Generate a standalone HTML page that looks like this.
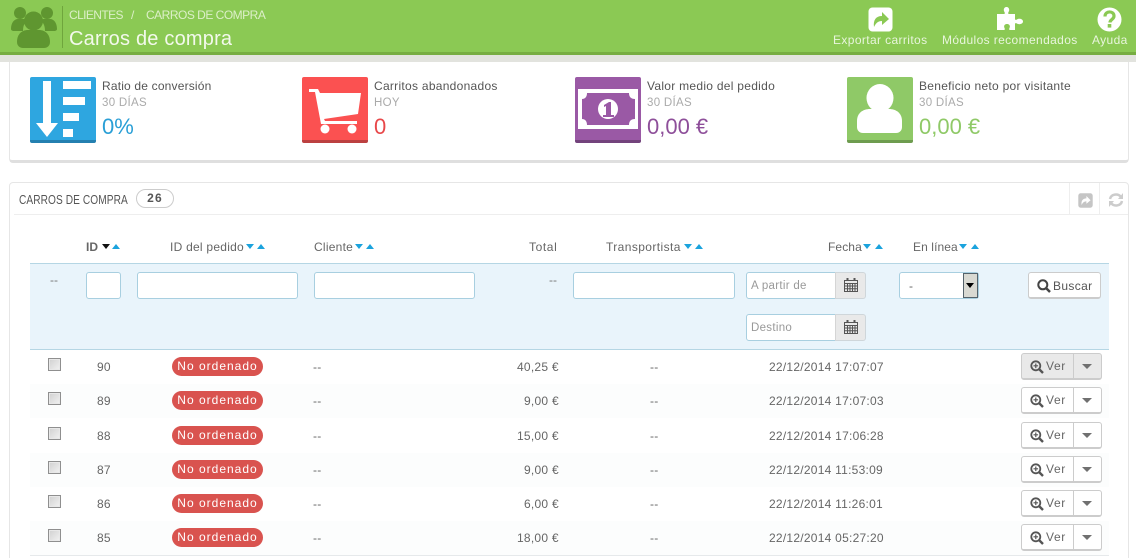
<!DOCTYPE html>
<html><head><meta charset="utf-8"><style>
html,body{margin:0;padding:0;overflow:hidden;width:1136px;height:558px;background:#fff}
#w{width:1136px;height:558px;overflow:hidden;background:#fff;position:relative;font-family:"Liberation Sans",sans-serif;color:#666;font-size:12px}
.a{position:absolute;white-space:nowrap}
.hd{color:#dcefc8;font-size:12px;letter-spacing:.35px}
.tool{color:#e8f5dc;font-size:12px;letter-spacing:.38px;top:33px}
.k{top:79px;color:#555;font-size:12px;letter-spacing:.28px}
.s{top:97px;color:#aaa;font-size:11.5px;letter-spacing:.3px}
.v{top:114px;font-size:22px;line-height:26px}
.ic{top:77px;width:66px;height:63px;border-radius:2px;overflow:hidden}
.th{top:240px;color:#666;font-size:12px;letter-spacing:.25px}
.dn,.up{position:absolute;width:0;height:0;border-left:4.5px solid transparent;border-right:4.5px solid transparent;top:244px}
.dn{border-top:5px solid #1ba3dd}
.up{border-bottom:5px solid #1ba3dd}
.in{position:absolute;box-sizing:border-box;background:#fff;border:1px solid #a8cfe0;border-radius:3px;height:27px;top:272px}
.cal{position:absolute;left:835px;width:31px;height:27px;box-sizing:border-box;background:#e9e9e9;border:1px solid #cfd6da;border-left:1px solid #d5d5d5;border-radius:0 3px 3px 0}
.ph{color:#999;font-size:11.5px;line-height:27px;letter-spacing:.3px;left:746px;width:90px;border-radius:3px 0 0 3px}
.r{position:absolute;left:30px;width:1079px;height:34px;border-bottom:1px solid #e6e9eb;background:#fff}
.r.o{background:#fcfdfd}
.c{position:absolute;color:#666;font-size:12px;letter-spacing:.25px}
.cb{position:absolute;left:48px;width:13px;height:13px;box-sizing:border-box;border:1px solid #8f8f8f;background:linear-gradient(135deg,#d0d0d0,#f2f2f2);box-shadow:inset 0 0 0 1px #e8e8e8}
.b{position:absolute;left:172px;width:91px;height:19px;border-radius:10px;background:#d9534f;color:#fff;font-size:12px;line-height:19px;text-align:center;letter-spacing:1px}
.ver{position:absolute;left:1021px;width:81px;height:27px;box-sizing:border-box;border:1px solid #ccc;border-bottom:2px solid #ccc;border-radius:3px;background:#fff}
.ver i{position:absolute;left:51px;top:0;height:100%;border-left:1px solid #ccc}
.ver b{position:absolute;left:60px;top:10px;width:0;height:0;border-left:5px solid transparent;border-right:5px solid transparent;border-top:5px solid #707070}
.ver span{position:absolute;left:24px;top:5px;font-size:12px;letter-spacing:.6px;color:#666}
.ver svg{position:absolute;left:8px;top:6px}
</style></head><body><div id="w">

<!-- KPI panel -->
<div class="a" style="left:9px;top:56px;width:1120px;height:107px;box-sizing:border-box;border:1px solid #e6e6e6;border-bottom:3px solid #dfdfdf;border-radius:4px;background:#fff"></div>

<div class="a" style="left:0;top:0;width:1136px;height:52px;background:#8bc954"></div>
<div class="a" style="left:0;top:52px;width:1136px;height:3px;background:#77ad42"></div>
<div class="a" style="left:0;top:55px;width:1136px;height:7px;background:#e2e3de"></div>

<svg class="a" style="left:10px;top:5px" width="48" height="44" viewBox="0 0 48 44" fill="#5f9630">
<circle cx="10" cy="8" r="6"/><circle cx="37" cy="8" r="6"/>
<path d="M1 24c0-6 3-10 7-10h6c2 0 3 1 3 2-3 2-4 6-4 10H4c-2 0-3-1-3-2zM47 24c0-6-3-10-7-10h-6c-2 0-3 1-3 2 3 2 4 6 4 10h9c2 0 3-1 3-2z"/>
<circle cx="23.500" cy="16" r="9.500"/>
<path d="M7 37c0-8 5-12 11-12h11c6 0 11 4 11 12 0 4-3 6-6 6H13c-3 0-6-2-6-6z"/>
</svg>
<div class="a" style="left:62px;top:6px;width:1px;height:42px;background:#6fa53d"></div>
<div class="a hd" style="left:69px;top:8px;letter-spacing:-.6px">CLIENTES</div>
<div class="a hd" style="left:131px;top:8px">/</div>
<div class="a hd" style="left:146px;top:8px;letter-spacing:-.5px">CARROS DE COMPRA</div>
<div class="a" style="left:69px;top:28px;color:#f3f9ec;font-size:20px;letter-spacing:.2px">Carros de compra</div>

<svg class="a" style="left:868px;top:7px" width="25" height="25" viewBox="0 0 25 25">
<rect width="24" height="24" x=".5" y=".5" rx="4" fill="#fff"/>
<path d="M6 20c-1-7 2-11 8-11V5l7 7-7 6v-4c-4 0-6 2-8 6z" fill="#8bc954"/></svg>
<div class="a tool" style="left:833px">Exportar carritos</div>
<svg class="a" style="left:996px;top:5px" width="28" height="27" viewBox="0 0 28 27" fill="#fff">
<path d="M1 9h7c1 0 1-1 .5-2C7 5 8 2 10.500 2s3.500 3 2 5c-.5 1-.5 2 .5 2h6v5c0 1 1 1 2 .5 2-1.500 6-.5 6 2s-4 3.500-6 2c-1-.5-2-.5-2 .5v6h-5c-1 0-1-1-.5-2 1-2 0-4-2.500-4s-3.500 2-2.500 4c.5 1 .5 2-.5 2H1z"/></svg>
<div class="a tool" style="left:942px">Módulos recomendados</div>
<svg class="a" style="left:1097px;top:7px" width="25" height="25" viewBox="0 0 25 25">
<circle cx="12.500" cy="12.500" r="12" fill="#fff"/>
<path d="M8 9.500c0-6 9-6 9-.5 0 3.500-4 3.500-4 6.500" fill="none" stroke="#8bc954" stroke-width="3.200"/>
<rect x="10.700" y="17" width="3.600" height="3.600" fill="#8bc954"/></svg>
<div class="a tool" style="left:1092px">Ayuda</div>

<div class="a ic" style="left:30px;background:#2ea6e0;border-bottom:3px solid #2480b0">
<svg width="66" height="63" viewBox="0 0 66 63" fill="#fff">
<rect x="13" y="4" width="8" height="45"/><path d="M6 46h22L17 60z"/>
<rect x="33" y="4" width="28" height="8"/><rect x="33" y="20" width="22" height="8"/><rect x="33" y="36" width="16" height="8"/><rect x="33" y="52" width="10" height="8"/>
</svg></div>
<div class="a k" style="left:102px;letter-spacing:.18px">Ratio de conversión</div>
<div class="a s" style="left:102px">30 DÍAS</div>
<div class="a v" style="left:102px;color:#2a9fd6">0%</div>

<div class="a ic" style="left:302px;background:#fb5151;border-bottom:3px solid #bc4040">
<svg width="66" height="63" viewBox="0 0 66 63" fill="#fff">
<path d="M7 12h9l2 4h41l-3 21-34 5 1 2h32v3H19L13 15H7z"/><circle cx="23" cy="52" r="4.500"/><circle cx="50" cy="52" r="4.500"/>
</svg></div>
<div class="a k" style="left:374px">Carritos abandonados</div>
<div class="a s" style="left:374px">HOY</div>
<div class="a v" style="left:374px;color:#e8484a">0</div>

<div class="a ic" style="left:575px;background:#9a59a5;border-bottom:3px solid #73437c">
<svg width="66" height="63" viewBox="0 0 66 63">
<rect x="3" y="12" width="60" height="40" fill="#fff"/>
<path d="M12 16h42c0 4 2 6 6 6v20c-4 0-6 2-6 6H12c0-4-2-6-5-6V22c3 0 5-2 5-6z" fill="#9a59a5"/>
<circle cx="33" cy="32" r="10" fill="#fff"/>
<path d="M29 28l5-3h2v13h3v2H28v-2h3V29l-2 1z" fill="#9a59a5"/>
</svg></div>
<div class="a k" style="left:647px">Valor medio del pedido</div>
<div class="a s" style="left:647px">30 DÍAS</div>
<div class="a v" style="left:647px;color:#8e4f9a">0,00 €</div>

<div class="a ic" style="left:847px;background:#8fc967;border-bottom:3px solid #6e9c4f">
<svg width="66" height="63" viewBox="0 0 66 63" fill="#fff">
<ellipse cx="33" cy="21" rx="13.500" ry="14"/>
<path d="M10 50V44c0-8 6-12 13-12h19c7 0 13 4 13 12v6c0 3-2 6-6 6H16c-4 0-6-3-6-6z"/>
</svg></div>
<div class="a k" style="left:919px">Beneficio neto por visitante</div>
<div class="a s" style="left:919px">30 DÍAS</div>
<div class="a v" style="left:919px;color:#8fc967">0,00 €</div>

<!-- Table panel -->
<div class="a" style="left:9px;top:182px;width:1120px;height:400px;box-sizing:border-box;border:1px solid #e6e6e6;border-radius:4px;background:#fff"></div>
<div class="a" style="left:14px;top:214px;width:1114px;height:1px;background:#eee"></div>
<div class="a" style="left:19px;top:192px;color:#555;font-size:13px;letter-spacing:.1px;transform:scaleX(.78);transform-origin:0 0">CARROS DE COMPRA</div>
<div class="a" style="left:136px;top:189px;width:38px;height:19px;box-sizing:border-box;border:1px solid #ccc;border-radius:10px;background:#fff;text-align:center;font-weight:bold;font-size:12px;line-height:17px;letter-spacing:1.2px;color:#555">26</div>
<div class="a" style="left:1069px;top:183px;width:1px;height:31px;background:#eee"></div>
<div class="a" style="left:1099px;top:183px;width:1px;height:31px;background:#eee"></div>
<svg class="a" style="left:1078px;top:193px" width="15" height="15" viewBox="0 0 25 25">
<rect x=".5" y=".5" width="24" height="24" rx="4" fill="#c5c5c5"/><path d="M6 20c-1-7 2-11 8-11V5l7 7-7 6v-4c-4 0-6 2-8 6z" fill="#fff"/></svg>
<svg class="a" style="left:1108px;top:192px" width="16" height="16" viewBox="0 0 16 16" fill="none" stroke="#ccc" stroke-width="2.500">
<path d="M2 7c1-5 8-6 11-2M14 9c-1 5-8 6-11 2"/><path d="M15 1v6h-5z" fill="#ccc" stroke="none"/><path d="M1 15V9h5z" fill="#ccc" stroke="none"/></svg>

<!-- Headers -->
<div class="a th" style="left:86px;font-weight:bold;letter-spacing:0">ID</div>
<div class="dn" style="left:102px;border-top-color:#111"></div><div class="up" style="left:112px"></div>
<div class="a th" style="left:170px">ID del pedido</div>
<div class="dn" style="left:246px"></div><div class="up" style="left:257px"></div>
<div class="a th" style="left:314px">Cliente</div>
<div class="dn" style="left:355px"></div><div class="up" style="left:366px"></div>
<div class="a th" style="left:529px;letter-spacing:.6px">Total</div>
<div class="a th" style="left:606px;letter-spacing:.4px">Transportista</div>
<div class="dn" style="left:684px"></div><div class="up" style="left:695px"></div>
<div class="a th" style="left:828px;letter-spacing:.1px">Fecha</div>
<div class="dn" style="left:863px"></div><div class="up" style="left:875px"></div>
<div class="a th" style="left:913px;letter-spacing:.1px">En línea</div>
<div class="dn" style="left:959px"></div><div class="up" style="left:971px"></div>

<!-- Filter -->
<div class="a" style="left:30px;top:263px;width:1079px;height:87px;box-sizing:border-box;background:#e9f4fb;border-top:1px solid #b5d6e4;border-bottom:1px solid #b5d6e4"></div>
<div class="a" style="left:50px;top:273px;color:#777">--</div>
<div class="in" style="left:86px;width:35px"></div>
<div class="in" style="left:137px;width:161px"></div>
<div class="in" style="left:314px;width:161px"></div>
<div class="a" style="left:549px;top:273px;color:#777">--</div>
<div class="in" style="left:573px;width:162px"></div>

<div class="in ph" style="padding-left:4px">A partir de</div>
<div class="cal" style="top:272px"></div>
<div class="in ph" style="top:314px;padding-left:4px">Destino</div>
<div class="cal" style="top:314px"></div>
<svg class="a" style="left:844px;top:278px" width="14" height="14" viewBox="0 0 14 14" fill="none" stroke="#555"><path d="M.5 2.500h13v11H.5zM.5 5.500h13M.5 8h13M.5 10.700h13M3.500 5.500v8M6 5.500v8M8.500 5.500v8M11 5.500v8"/><path d="M3.500 0v3M10.500 0v3" stroke-width="2"/></svg>
<svg class="a" style="left:844px;top:320px" width="14" height="14" viewBox="0 0 14 14" fill="none" stroke="#555"><path d="M.5 2.500h13v11H.5zM.5 5.500h13M.5 8h13M.5 10.700h13M3.500 5.500v8M6 5.500v8M8.500 5.500v8M11 5.500v8"/><path d="M3.500 0v3M10.500 0v3" stroke-width="2"/></svg>

<div class="in" style="left:899px;width:80px;color:#666;line-height:27px;padding-left:9px">-</div>
<div class="a" style="left:963px;top:273px;width:15px;height:25px;box-sizing:border-box;background:#d9d9d2;border:1px solid #55626a"></div>
<div class="a" style="left:966px;top:283px;width:0;height:0;border-left:4.500px solid transparent;border-right:4.500px solid transparent;border-top:5px solid #000"></div>

<div class="a" style="left:1028px;top:272px;width:73px;height:27px;box-sizing:border-box;border:1px solid #ccc;border-bottom:2px solid #ccc;border-radius:3px;background:#fff;color:#555;line-height:26px;padding-left:24px;letter-spacing:.35px;font-size:12px">Buscar</div>
<svg class="a" style="left:1037px;top:279px" width="14" height="14" viewBox="0 0 14 14" fill="none" stroke="#444" stroke-width="2"><circle cx="5.800" cy="5.800" r="4.500"/><path d="M9 9l4 4" stroke-width="2.500"/></svg>

<!-- Rows -->
<div class="r" style="top:350px"></div>
<div class="r o" style="top:384px"></div>
<div class="r" style="top:418px;height:34.500px"></div>
<div class="r o" style="top:453px"></div>
<div class="r" style="top:487px"></div>
<div class="r o" style="top:521px"></div>

<div class="cb" style="top:358px"></div><div class="c" style="left:97px;top:360px">90</div><div class="b" style="top:357px">No ordenado</div><div class="c" style="left:313px;top:360px">--</div><div class="c" style="left:517px;top:360px">40,25 €</div><div class="c" style="left:650px;top:360px">--</div><div class="c" style="left:769px;top:360px">22/12/2014 17:07:07</div>
<div class="ver" style="top:353px;background:#e9e9e9"><i></i><b></b><svg width="14" height="14" viewBox="0 0 14 14" fill="none" stroke="#555" stroke-width="1.800"><circle cx="5.800" cy="5.800" r="4.500"/><path d="M9 9l4 4" stroke-width="2.400"/><path d="M3.500 5.800h4.600M5.800 3.500v4.600" stroke-width="1.200"/></svg><span>Ver</span></div>

<div class="cb" style="top:392px"></div><div class="c" style="left:97px;top:394px">89</div><div class="b" style="top:391px">No ordenado</div><div class="c" style="left:313px;top:394px">--</div><div class="c" style="left:524px;top:394px">9,00 €</div><div class="c" style="left:650px;top:394px">--</div><div class="c" style="left:769px;top:394px">22/12/2014 17:07:03</div>
<div class="ver" style="top:387px"><i></i><b></b><svg width="14" height="14" viewBox="0 0 14 14" fill="none" stroke="#555" stroke-width="1.800"><circle cx="5.800" cy="5.800" r="4.500"/><path d="M9 9l4 4" stroke-width="2.400"/><path d="M3.500 5.800h4.600M5.800 3.500v4.600" stroke-width="1.200"/></svg><span>Ver</span></div>

<div class="cb" style="top:427px"></div><div class="c" style="left:97px;top:429px">88</div><div class="b" style="top:426px">No ordenado</div><div class="c" style="left:313px;top:429px">--</div><div class="c" style="left:517px;top:429px">15,00 €</div><div class="c" style="left:650px;top:429px">--</div><div class="c" style="left:769px;top:429px">22/12/2014 17:06:28</div>
<div class="ver" style="top:422px"><i></i><b></b><svg width="14" height="14" viewBox="0 0 14 14" fill="none" stroke="#555" stroke-width="1.800"><circle cx="5.800" cy="5.800" r="4.500"/><path d="M9 9l4 4" stroke-width="2.400"/><path d="M3.500 5.800h4.600M5.800 3.500v4.600" stroke-width="1.200"/></svg><span>Ver</span></div>

<div class="cb" style="top:461px"></div><div class="c" style="left:97px;top:463px">87</div><div class="b" style="top:460px">No ordenado</div><div class="c" style="left:313px;top:463px">--</div><div class="c" style="left:524px;top:463px">9,00 €</div><div class="c" style="left:650px;top:463px">--</div><div class="c" style="left:769px;top:463px">22/12/2014 11:53:09</div>
<div class="ver" style="top:456px"><i></i><b></b><svg width="14" height="14" viewBox="0 0 14 14" fill="none" stroke="#555" stroke-width="1.800"><circle cx="5.800" cy="5.800" r="4.500"/><path d="M9 9l4 4" stroke-width="2.400"/><path d="M3.500 5.800h4.600M5.800 3.500v4.600" stroke-width="1.200"/></svg><span>Ver</span></div>

<div class="cb" style="top:495px"></div><div class="c" style="left:97px;top:497px">86</div><div class="b" style="top:494px">No ordenado</div><div class="c" style="left:313px;top:497px">--</div><div class="c" style="left:524px;top:497px">6,00 €</div><div class="c" style="left:650px;top:497px">--</div><div class="c" style="left:769px;top:497px">22/12/2014 11:26:01</div>
<div class="ver" style="top:490px"><i></i><b></b><svg width="14" height="14" viewBox="0 0 14 14" fill="none" stroke="#555" stroke-width="1.800"><circle cx="5.800" cy="5.800" r="4.500"/><path d="M9 9l4 4" stroke-width="2.400"/><path d="M3.500 5.800h4.600M5.800 3.500v4.600" stroke-width="1.200"/></svg><span>Ver</span></div>

<div class="cb" style="top:529px"></div><div class="c" style="left:97px;top:531px">85</div><div class="b" style="top:528px">No ordenado</div><div class="c" style="left:313px;top:531px">--</div><div class="c" style="left:517px;top:531px">18,00 €</div><div class="c" style="left:650px;top:531px">--</div><div class="c" style="left:769px;top:531px">22/12/2014 05:27:20</div>
<div class="ver" style="top:524px"><i></i><b></b><svg width="14" height="14" viewBox="0 0 14 14" fill="none" stroke="#555" stroke-width="1.800"><circle cx="5.800" cy="5.800" r="4.500"/><path d="M9 9l4 4" stroke-width="2.400"/><path d="M3.500 5.800h4.600M5.800 3.500v4.600" stroke-width="1.200"/></svg><span>Ver</span></div>

</div></body></html>
